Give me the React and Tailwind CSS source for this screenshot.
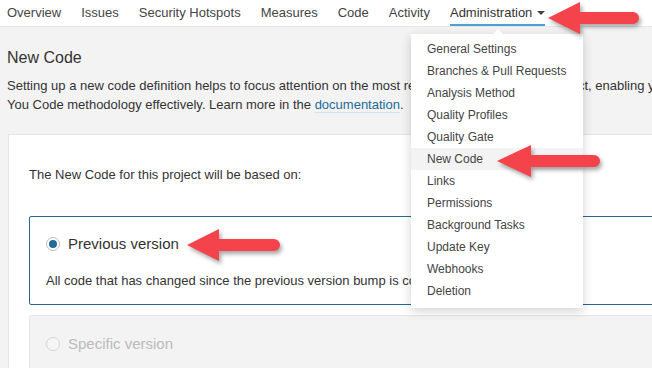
import React from "react";

function Arrow({ tx, ty, hx, end }) {
  const d = `M ${tx} ${ty} L ${hx} ${ty - 16} L ${hx} ${ty - 6} L ${end - 6} ${ty - 6} A 6 6 0 0 1 ${end - 6} ${ty + 6} L ${hx} ${ty + 6} L ${hx} ${ty + 16} Z`;
  return <path d={d} fill="#f4434a" />;
}

const menuItems = [
  "General Settings",
  "Branches & Pull Requests",
  "Analysis Method",
  "Quality Profiles",
  "Quality Gate",
  "New Code",
  "Links",
  "Permissions",
  "Background Tasks",
  "Update Key",
  "Webhooks",
  "Deletion",
];

export default function App() {
  return (
    <div
      className="relative w-[652px] h-[368px] overflow-hidden bg-[#f3f3f3] text-[#333]"
      style={{ fontFamily: '"Liberation Sans", Arial, sans-serif' }}
    >
      <nav className="h-[27px] bg-white border-b border-[#e6e6e6] flex items-stretch pl-[7px] gap-5 text-[13px] text-[#444] whitespace-nowrap">
        <span className="flex items-center">Overview</span>
        <span className="flex items-center">Issues</span>
        <span className="flex items-center">Security Hotspots</span>
        <span className="flex items-center">Measures</span>
        <span className="flex items-center">Code</span>
        <span className="flex items-center">Activity</span>
        <span className="flex items-center gap-[5px] border-b-2 border-[#4b9fd5] text-[#333] pt-[1px]">
          Administration
          <span className="w-0 h-0 border-l-[4px] border-r-[4px] border-t-[4px] border-l-transparent border-r-transparent border-t-[#444]" />
        </span>
      </nav>

      <div className="pl-[7px]">
        <h1 className="mt-[21px] text-[16px] leading-[20px] font-normal text-[#333]">New Code</h1>
        <div className="mt-[8px] text-[13px] leading-[19px] text-[#333] whitespace-nowrap">
          <div>
            Setting up a new code definition helps to focus attention on the most relevant changes in your project, enabling you to follow the Clean as
          </div>
          <div>
            You Code methodology effectively. Learn more in the{" "}
            <span className="text-[#236a97] border-b border-[#cfe3f0]">documentation</span>.
          </div>
        </div>

        <div className="mt-[20px] ml-[1px] w-[900px] bg-white border border-[#e6e6e6] pl-[20px] pt-[30px] pb-[40px]">
          <div className="text-[13px] leading-[19px] text-[#333]">
            The New Code for this project will be based on:
          </div>

          <div className="mt-[32px] border border-[#236a97] rounded-[2px] px-[16px] pt-[17px] pb-[14px]">
            <div className="flex items-center gap-[8px] h-[20px]">
              <span className="w-[14px] h-[14px] rounded-full border border-[#bcbcbc] flex items-center justify-center bg-white">
                <span className="w-[8px] h-[8px] rounded-full bg-[#236a97]" />
              </span>
              <span className="text-[15px] leading-[20px] text-[#333]">Previous version</span>
            </div>
            <div className="mt-[17px] text-[13px] leading-[19px] text-[#333] whitespace-nowrap">
              All code that has changed since the previous version bump is considered new code.
            </div>
          </div>

          <div className="mt-[10px] border border-[#e6e6e6] bg-[#f3f3f3] rounded-[2px] px-[16px] pt-[18px] pb-[40px]">
            <div className="flex items-center gap-[8px] h-[20px]">
              <span className="w-[14px] h-[14px] rounded-full border border-[#d4d4d4] bg-[#f6f6f6]" />
              <span className="text-[15px] leading-[20px] text-[#bbb]">Specific version</span>
            </div>
          </div>
        </div>
      </div>

      {/* Dropdown menu */}
      <div className="absolute left-[411px] top-[34px] w-[172px] bg-white shadow-[0_3px_10px_rgba(0,0,0,0.18)] pt-[4px] pb-[6px] text-[12px] text-[#444]">
        <span className="absolute -top-[5px] left-[82px] w-0 h-0 border-l-[5px] border-r-[5px] border-b-[5px] border-l-transparent border-r-transparent border-b-white" />
        {menuItems.map((m) => (
          <div
            key={m}
            className={
              "h-[22px] flex items-center pl-[16px] whitespace-nowrap " +
              (m === "New Code" ? "bg-[#f3f3f3]" : "")
            }
          >
            {m}
          </div>
        ))}
      </div>

      {/* Red arrows */}
      <svg
        className="absolute left-0 top-0 pointer-events-none"
        width="652"
        height="368"
        style={{ filter: "drop-shadow(2px 3px 2px rgba(0,0,0,0.35))" }}
      >
        <Arrow tx={548} ty={18} hx={580} end={639} />
        <Arrow tx={497} ty={161} hx={531} end={600} />
        <Arrow tx={187} ty={245} hx={219} end={280} />
      </svg>
    </div>
  );
}
